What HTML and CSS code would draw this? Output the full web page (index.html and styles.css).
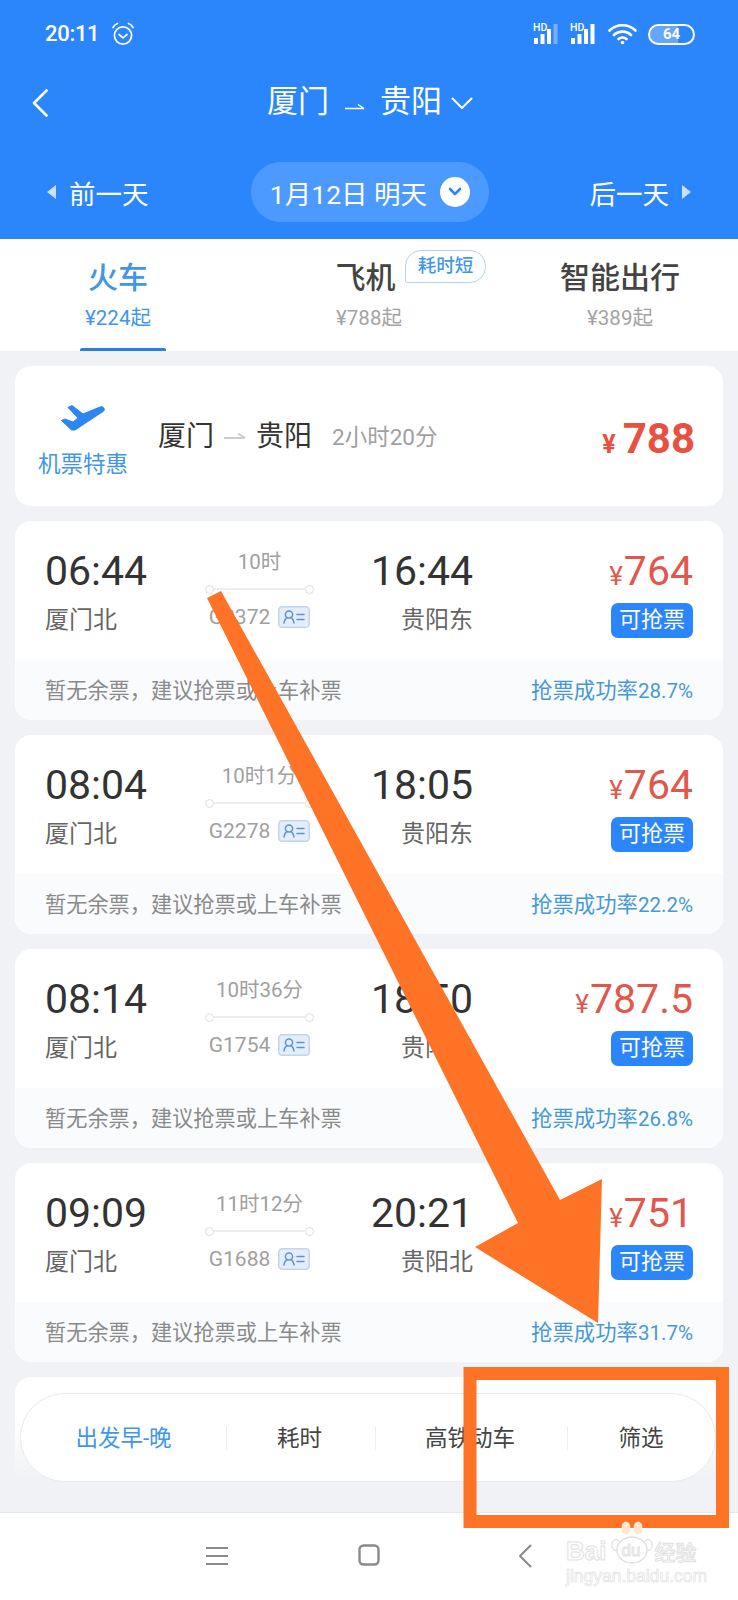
FILE: index.html
```html
<!DOCTYPE html>
<html lang="zh-CN">
<head>
<meta charset="utf-8">
<title>厦门 - 贵阳</title>
<link rel="stylesheet" href="styles.css">
</head>
<body>
<div class="page">
  <header class="header">
    <div class="status">
      <div class="status-left">
        <span class="clock">20:11</span>
        <svg class="alarm" viewBox="0 0 24 24" fill="none" stroke="#fff" stroke-width="1.7" stroke-linecap="round" stroke-linejoin="round"><circle cx="12" cy="13.5" r="8.6"/><path d="M8 12.5l4 3.4 4-3.4M2 5.5C3 3.500 4.500 2.200 6.500 1.500M22 5.500C21 3.500 19.500 2.200 17.500 1.500"/></svg>
      </div>
      <div class="status-right">
        <span class="signal">
          <span class="hd">HD</span>
          <svg class="bars" viewBox="0 0 29 20" fill="#fff"><rect x="3" y="14" width="4" height="6"/><rect x="9.500" y="10" width="4" height="10"/><rect x="16" y="5" width="4" height="15"/><rect x="22.500" y="0" width="4" height="20" fill-opacity=".35"/></svg>
        </span>
        <span class="signal">
          <span class="hd">HD</span>
          <svg class="bars" viewBox="0 0 29 20" fill="#fff"><rect x="3" y="14" width="4" height="6"/><rect x="9.500" y="10" width="4" height="10"/><rect x="16" y="5" width="4" height="15"/><rect x="22.500" y="0" width="4" height="20"/></svg>
        </span>
        <svg class="wifi" viewBox="0 0 29 22" fill="none" stroke="#fff" stroke-width="2.600" stroke-linecap="round"><path d="M1.500 7.500C8.500 .5 20.500 .5 27.500 7.500M6 12C10.500 7.500 18.500 7.500 23 12M10.500 16C12.500 14 16.500 14 18.500 16"/><circle cx="14.500" cy="19.500" r="1.800" fill="#fff" stroke="none"/></svg>
        <span class="battery"><span class="battery-fill"></span><span class="battery-num">64</span></span>
      </div>
    </div>
    <div class="title-row">
      <svg class="back" viewBox="0 0 16 28" fill="none" stroke="#fff" stroke-width="2.600" stroke-linecap="round" stroke-linejoin="round"><path d="M14.500 1.500L2 14l12.500 12.500"/></svg>
      <div class="title">
        <span>厦门</span>
        <svg class="route-arrow" viewBox="0 0 22 10" fill="none" stroke="#fff" stroke-width="1.500"><path d="M1 7.500h19M14 3.500l6 4"/></svg>
        <span>贵阳</span>
        <svg class="title-chev" viewBox="0 0 22 13" fill="none" stroke="#fff" stroke-width="2" stroke-linecap="round" stroke-linejoin="round"><path d="M1.500 1.500L11 11l9.500-9.500"/></svg>
      </div>
    </div>
    <div class="date-row">
      <div class="day-link">
        <span class="tri tri-left"></span>
        <span>前一天</span>
      </div>
      <div class="date-pill">
        <span>1月12日 明天</span>
        <span class="pill-circle"><svg viewBox="0 0 14 10" fill="none" stroke="#2b86fc" stroke-width="2.600" stroke-linecap="round" stroke-linejoin="round"><path d="M2 2l5 5 5-5"/></svg></span>
      </div>
      <div class="day-link">
        <span>后一天</span>
        <span class="tri tri-right"></span>
      </div>
    </div>
  </header>

  <nav class="tabs">
    <div class="tab tab-active">
      <div class="tab-name">火车</div>
      <div class="tab-price">¥224起</div>
      <span class="tab-line"></span>
    </div>
    <div class="tab">
      <div class="tab-name tab-name-shift">飞机</div>
      <div class="tab-price">¥788起</div>
      <span class="bubble">耗时短</span>
    </div>
    <div class="tab">
      <div class="tab-name">智能出行</div>
      <div class="tab-price">¥389起</div>
    </div>
  </nav>

  <main class="list">
    <section class="promo">
      <div class="promo-left">
        <svg class="plane" viewBox="0 0 46 28" fill="#2b86f0" stroke="#2b86f0" stroke-width="1" stroke-linejoin="round"><path d="M8 3.500L12 1.500 23 10 40 3C43 2 45 4.500 44 6.500 43.500 7.500 42 8.500 40 9.500L15 26 11.500 26 1.500 16.500 5 15 13 18 18 14Z"/></svg>
        <span class="promo-label">机票特惠</span>
      </div>
      <div class="promo-route">
        <span>厦门</span>
        <svg class="promo-arrow" viewBox="0 0 22 10" fill="none" stroke="#c9ccd0" stroke-width="1.800"><path d="M0 7h21M14 2.500l7 4.500"/></svg>
        <span>贵阳</span>
        <span class="promo-time">2小时20分</span>
      </div>
      <div class="promo-price"><span class="promo-yen">¥</span><span>788</span></div>
    </section>

    <article class="card">
      <div class="card-main">
        <div class="col"><div class="time">06:44</div><div class="station">厦门北</div></div>
        <div class="col col-mid">
          <div class="duration">10时</div>
          <div class="track"><i class="dot"></i><i class="rail"></i><i class="dot"></i></div>
          <div class="train"><span>G2372</span><svg class="id" viewBox="0 0 32 22"><rect x=".75" y=".75" width="30.500" height="20.500" rx="3.500" fill="#e4edfb" stroke="#c3d4ec" stroke-width="1.500"/><g fill="none" stroke="#5b93d6" stroke-width="1.500" stroke-linecap="round"><circle cx="11" cy="8.500" r="3.600"/><path d="M6 17c.5-3 2-5 3.500-5.500M16 17c-.5-3-2-5-3.500-5.500M19 8.500h7M19 13.500h7"/></g></svg></div>
        </div>
        <div class="col col-arr"><div class="time">16:44</div><div class="station">贵阳东</div></div>
        <div class="col col-price"><div class="price"><span class="yen">¥</span>764</div><div class="grab">可抢票</div></div>
      </div>
      <div class="card-foot"><span class="hint">暂无余票，建议抢票或上车补票</span><span class="rate">抢票成功率<span class="rate-num">28.7%</span></span></div>
    </article>

    <article class="card">
      <div class="card-main">
        <div class="col"><div class="time">08:04</div><div class="station">厦门北</div></div>
        <div class="col col-mid">
          <div class="duration">10时1分</div>
          <div class="track"><i class="dot"></i><i class="rail"></i><i class="dot"></i></div>
          <div class="train"><span>G2278</span><svg class="id" viewBox="0 0 32 22"><rect x=".75" y=".75" width="30.500" height="20.500" rx="3.500" fill="#e4edfb" stroke="#c3d4ec" stroke-width="1.500"/><g fill="none" stroke="#5b93d6" stroke-width="1.500" stroke-linecap="round"><circle cx="11" cy="8.500" r="3.600"/><path d="M6 17c.5-3 2-5 3.500-5.500M16 17c-.5-3-2-5-3.500-5.500M19 8.500h7M19 13.500h7"/></g></svg></div>
        </div>
        <div class="col col-arr"><div class="time">18:05</div><div class="station">贵阳东</div></div>
        <div class="col col-price"><div class="price"><span class="yen">¥</span>764</div><div class="grab">可抢票</div></div>
      </div>
      <div class="card-foot"><span class="hint">暂无余票，建议抢票或上车补票</span><span class="rate">抢票成功率<span class="rate-num">22.2%</span></span></div>
    </article>

    <article class="card">
      <div class="card-main">
        <div class="col"><div class="time">08:14</div><div class="station">厦门北</div></div>
        <div class="col col-mid">
          <div class="duration">10时36分</div>
          <div class="track"><i class="dot"></i><i class="rail"></i><i class="dot"></i></div>
          <div class="train"><span>G1754</span><svg class="id" viewBox="0 0 32 22"><rect x=".75" y=".75" width="30.500" height="20.500" rx="3.500" fill="#e4edfb" stroke="#c3d4ec" stroke-width="1.500"/><g fill="none" stroke="#5b93d6" stroke-width="1.500" stroke-linecap="round"><circle cx="11" cy="8.500" r="3.600"/><path d="M6 17c.5-3 2-5 3.500-5.500M16 17c-.5-3-2-5-3.500-5.500M19 8.500h7M19 13.500h7"/></g></svg></div>
        </div>
        <div class="col col-arr"><div class="time">18:50</div><div class="station">贵阳东</div></div>
        <div class="col col-price"><div class="price"><span class="yen">¥</span>787.5</div><div class="grab">可抢票</div></div>
      </div>
      <div class="card-foot"><span class="hint">暂无余票，建议抢票或上车补票</span><span class="rate">抢票成功率<span class="rate-num">26.8%</span></span></div>
    </article>

    <article class="card">
      <div class="card-main">
        <div class="col"><div class="time">09:09</div><div class="station">厦门北</div></div>
        <div class="col col-mid">
          <div class="duration">11时12分</div>
          <div class="track"><i class="dot"></i><i class="rail"></i><i class="dot"></i></div>
          <div class="train"><span>G1688</span><svg class="id" viewBox="0 0 32 22"><rect x=".75" y=".75" width="30.500" height="20.500" rx="3.500" fill="#e4edfb" stroke="#c3d4ec" stroke-width="1.500"/><g fill="none" stroke="#5b93d6" stroke-width="1.500" stroke-linecap="round"><circle cx="11" cy="8.500" r="3.600"/><path d="M6 17c.5-3 2-5 3.500-5.500M16 17c-.5-3-2-5-3.500-5.500M19 8.500h7M19 13.500h7"/></g></svg></div>
        </div>
        <div class="col col-arr"><div class="time">20:21</div><div class="station">贵阳北</div></div>
        <div class="col col-price"><div class="price"><span class="yen">¥</span>751</div><div class="grab">可抢票</div></div>
      </div>
      <div class="card-foot"><span class="hint">暂无余票，建议抢票或上车补票</span><span class="rate">抢票成功率<span class="rate-num">31.7%</span></span></div>
    </article>

    <section class="sort-panel">
      <div class="sort-bar">
        <span class="sort-item sort-active">出发早-晚</span>
        <span class="sort-item">耗时</span>
        <span class="sort-item">高铁动车</span>
        <span class="sort-item">筛选</span>
      </div>
    </section>
  </main>

  <footer class="navbar">
    <svg class="nav-menu" viewBox="0 0 22 20" fill="none" stroke="#8a8a8a" stroke-width="2"><path d="M0 2h22M0 10h22M0 18h22"/></svg>
    <svg class="nav-home" viewBox="0 0 22 22" fill="none" stroke="#8a8a8a" stroke-width="2.400"><rect x="1.500" y="1.500" width="19" height="19" rx="4"/></svg>
    <svg class="nav-back" viewBox="0 0 14 24" fill="none" stroke="#8a8a8a" stroke-width="2" stroke-linecap="round" stroke-linejoin="round"><path d="M12.500 1.500L2 12l10.500 10.500"/></svg>
  </footer>

  <svg class="overlay" viewBox="0 0 738 1600" fill="none">
    <polygon points="207,598 221,591 560,1200 602,1179 598,1323 475,1247 518,1223" fill="#ff7326"/>
    <path d="M470 1373.500H722.500V1521.500H470Z" stroke="#ff7326" stroke-width="13"/>
  </svg>

  <div class="watermark">
    <svg class="paw" viewBox="0 0 44 44" fill="#fff" stroke="#e0e0e0" stroke-width="1.300"><ellipse cx="6" cy="24" rx="4" ry="5.500"/><ellipse cx="38" cy="24" rx="4" ry="5.500"/><ellipse cx="16" cy="7" rx="4.500" ry="6.500" fill="#fde6d6" stroke="none"/><ellipse cx="28" cy="7" rx="4.500" ry="6.500" fill="#fde6d6" stroke="none"/><ellipse cx="22" cy="29" rx="15" ry="13"/></svg>
    <div class="wm-brand"><span>Bai</span><span class="wm-du">du</span><span class="wm-cn">经验</span></div>
    <div class="wm-url">jingyan.baidu.com</div>
  </div>
</div>
</body>
</html>
```

FILE: styles.css
```css
* { box-sizing: border-box; }

html, body {
  margin: 0;
  padding: 0;
}

body {
  font-family: Roboto, "Noto Sans CJK SC", sans-serif;
  background: #f0f2f5;
}

.page {
  position: relative;
  width: 738px;
  height: 1600px;
  overflow: hidden;
  display: flex;
  flex-direction: column;
  background: #f0f2f5;
}

/* header */
.header {
  height: 239px;
  background: #2b86fc;
  color: #fff;
  flex: none;
}

.status {
  height: 68px;
  padding: 0 43px 0 45px;
  display: flex;
  align-items: center;
  justify-content: space-between;
}

.status-left { display: flex; align-items: center; gap: 12px; }
.clock { font-size: 22px; font-weight: 500; line-height: 1; letter-spacing: -.3px; }
.alarm { width: 24px; height: 24px; }

.status-right { display: flex; align-items: center; }

.signal {
  position: relative;
  width: 29px;
  height: 21px;
  margin-right: 8px;
  display: block;
}

.hd {
  position: absolute;
  left: 2px;
  top: -1px;
  font-size: 10.500px;
  line-height: 10px;
  font-weight: 500;
}

.bars { display: block; width: 29px; height: 20px; }
.wifi { width: 29px; height: 22px; margin: 0 11px 0 3px; }

.battery {
  position: relative;
  width: 47px;
  height: 21px;
  border: 2px solid #fff;
  border-radius: 11px;
  overflow: hidden;
  display: flex;
  align-items: center;
  justify-content: center;
}

.battery-fill {
  position: absolute;
  left: 0;
  top: 0;
  bottom: 0;
  width: 64%;
  background: rgba(255, 255, 255, .28);
}

.battery-num {
  position: relative;
  font-size: 15px;
  font-weight: 700;
  line-height: 1;
}

.title-row {
  position: relative;
  height: 66px;
  display: flex;
  align-items: center;
  padding-left: 267px;
}

.back {
  position: absolute;
  left: 32px;
  top: 21px;
  width: 16px;
  height: 28px;
}

.title {
  display: flex;
  align-items: center;
  margin-top: 1px;
  font-size: 31px;
  line-height: 40px;
}

.route-arrow { width: 22px; height: 10px; margin: 8px 14px 0 15px; }
.title-chev { width: 22px; height: 13px; margin: 3px 0 0 9px; }

.date-row {
  height: 60px;
  margin-top: 28px;
  padding: 0 47px;
  display: grid;
  grid-template-columns: 204px 238px 202px;
  align-items: center;
  font-size: 26.500px;
}

.day-link { display: flex; align-items: center; gap: 13px; }
.day-link:last-child { justify-content: flex-end; }

.tri { width: 0; height: 0; border-style: solid; opacity: .75; }
.tri-left { border-width: 7px 9px 7px 0; border-color: transparent #fff transparent transparent; }
.tri-right { border-width: 7px 0 7px 9px; border-color: transparent transparent transparent #fff; }

.date-pill {
  height: 60px;
  border-radius: 30px;
  background: #4c9aff;
  display: flex;
  align-items: center;
  justify-content: center;
  gap: 13px;
  font-size: 26.500px;
}

.pill-circle {
  width: 30px;
  height: 30px;
  border-radius: 50%;
  background: #fff;
  display: flex;
  align-items: center;
  justify-content: center;
}

.pill-circle svg { width: 14px; height: 10px; }

/* tabs */
.tabs {
  height: 112px;
  flex: none;
  background: #fff;
  display: grid;
  grid-template-columns: 236px 266px 236px;
}

.tab {
  position: relative;
  text-align: center;
  padding-top: 17px;
}

.tab-name {
  font-size: 30px;
  line-height: 44px;
  font-weight: 500;
  color: #444;
}

.tab-name-shift { margin-right: 7px; }

.tab-price {
  font-size: 20.500px;
  line-height: 32px;
  margin-top: 2px;
  color: #a3a3a3;
}

.tab-active .tab-name, .tab-active .tab-price { color: #3f97e6; }

.tab-line {
  position: absolute;
  left: 80px;
  bottom: 0;
  width: 86px;
  height: 3px;
  border-radius: 2px 2px 0 0;
  background: #2b7de0;
}

.bubble {
  position: absolute;
  left: 169px;
  top: 11px;
  width: 81px;
  height: 33px;
  border: 1px solid #b4d4ee;
  border-radius: 16px 16px 16px 2px;
  background: #fff;
  color: #3f97e6;
  font-size: 18.500px;
  font-weight: 500;
  line-height: 30px;
  text-align: center;
}

/* list */
.list {
  flex: 1;
  padding: 15px 15px 0;
  display: flex;
  flex-direction: column;
  gap: 15px;
}

.promo {
  height: 140px;
  border-radius: 16px;
  background: #fff;
  display: flex;
  align-items: center;
  padding: 0 28px 0 23px;
}

.promo-left {
  width: 120px;
  padding-top: 11px;
  display: flex;
  flex-direction: column;
  align-items: flex-start;
}

.plane { width: 46px; height: 28px; margin-left: 22px; }

.promo-label {
  font-size: 22.500px;
  line-height: 30px;
  margin-top: 17px;
  color: #3f97e6;
}

.promo-route {
  flex: 1;
  display: flex;
  align-items: center;
  margin-top: -4px;
  font-size: 28px;
  color: #333;
}

.promo-arrow { width: 22px; height: 10px; margin: 4px 10px 0 10px; }

.promo-time {
  font-size: 22.500px;
  color: #a0a0a0;
  margin-left: 20px;
  margin-top: 2px;
}

.promo-price {
  display: flex;
  align-items: baseline;
  gap: 7px;
  margin-top: 4px;
  color: #e8513f;
  font-size: 42px;
  font-weight: 700;
}

.promo-yen { font-size: 25px; }

.card {
  height: 199px;
  border-radius: 16px;
  overflow: hidden;
  background: #fff;
  flex: none;
}

.card-main {
  height: 139px;
  padding: 25px 30px 0;
  display: grid;
  grid-template-columns: 160px 109px 159px 220px;
}

.col { display: flex; flex-direction: column; }

.time {
  height: 50px;
  font-size: 41px;
  line-height: 50px;
  color: #333;
}

.station {
  height: 48px;
  font-size: 24px;
  line-height: 48px;
  color: #666;
}

.col-mid { align-items: center; color: #a0a0a0; }

.duration {
  height: 36px;
  font-size: 20.500px;
  line-height: 33px;
}

.track {
  width: 109px;
  height: 10px;
  margin-top: 2px;
  margin-bottom: -1px;
  display: flex;
  align-items: center;
}

.dot {
  width: 9px;
  height: 9px;
  border: 1.500px solid #dcdfe3;
  border-radius: 50%;
  flex: none;
}

.rail { flex: 1; height: 2px; background: #eceef0; }

.train {
  height: 48px;
  display: flex;
  align-items: center;
  gap: 8px;
  font-size: 21px;
  color: #a0a0a0;
}

.id { width: 32px; height: 22px; flex: none; }

.col-arr { align-items: flex-end; }
.col-price { align-items: flex-end; }

.price {
  height: 50px;
  font-size: 41px;
  line-height: 50px;
  color: #e2574c;
}

.yen { font-size: 26px; margin-right: 1px; }

.grab {
  width: 82px;
  height: 35px;
  margin-top: 7px;
  border-radius: 7px;
  background: #2b86fc;
  color: #fff;
  font-size: 22px;
  line-height: 34px;
  text-align: center;
}

.card-foot {
  height: 60px;
  padding: 0 30px 3px;
  background: #fafbfc;
  display: flex;
  align-items: center;
  justify-content: space-between;
  font-size: 21.200px;
}

.hint { color: #8a8a8a; }
.rate { color: #4699d6; font-size: 21.400px; }
.rate-num { font-size: 20.500px; }

/* sort */
.sort-panel {
  flex: 1;
  padding: 16px 7px 0 5px;
  border-radius: 16px 16px 0 0;
  background: linear-gradient(#fff 30%, #f0f2f5 75%);
}

.sort-bar {
  height: 89px;
  border: 1.500px solid #e8eaee;
  border-radius: 45px;
  background: #fff;
  display: grid;
  grid-template-columns: 205px 149px 192px 150px;
  align-items: center;
}

.sort-item {
  display: flex;
  align-items: center;
  justify-content: center;
  height: 24px;
  padding: 0 3px 3px 0;
  font-size: 22.500px;
  color: #444;
}

.sort-item + .sort-item { border-left: 1px solid #eceef0; }
.sort-active { color: #3f97e6; padding-right: 0; }

/* nav */
.navbar {
  position: relative;
  height: 88px;
  flex: none;
  background: #fff;
  border-top: 1.500px solid #e4e6ea;
}

.nav-menu { position: absolute; left: 206px; top: 33px; width: 22px; height: 20px; }
.nav-home { position: absolute; left: 358px; top: 31px; width: 22px; height: 22px; }
.nav-back { position: absolute; left: 518px; top: 31px; width: 14px; height: 24px; }

/* overlays */
.overlay {
  position: absolute;
  left: 0;
  top: 0;
  width: 738px;
  height: 1600px;
  pointer-events: none;
}

.watermark {
  position: absolute;
  left: 566px;
  top: 1521px;
  width: 135px;
  height: 70px;
  pointer-events: none;
}

.paw { position: absolute; left: 44px; top: 0; width: 44px; height: 44px; }

.wm-brand {
  position: absolute;
  left: 0;
  top: 17px;
  width: 135px;
  display: flex;
  align-items: center;
  white-space: nowrap;
  font-family: "Liberation Sans", sans-serif;
  font-size: 26px;
  font-weight: 700;
  line-height: 26px;
  color: #fff;
  -webkit-text-stroke: 1px #e2e2e2;
}

.wm-du {
  margin-left: 15px;
  font-size: 17px;
  font-weight: 400;
}

.wm-cn {
  margin-left: 14px;
  font-family: "Noto Sans CJK SC", sans-serif;
  font-size: 21px;
  font-weight: 500;
}

.wm-url {
  position: absolute;
  left: 0;
  top: 46px;
  white-space: nowrap;
  font-family: "Liberation Sans", sans-serif;
  font-size: 17.500px;
  line-height: 18px;
  color: #fff;
  -webkit-text-stroke: .7px #e2e2e2;
}
```
